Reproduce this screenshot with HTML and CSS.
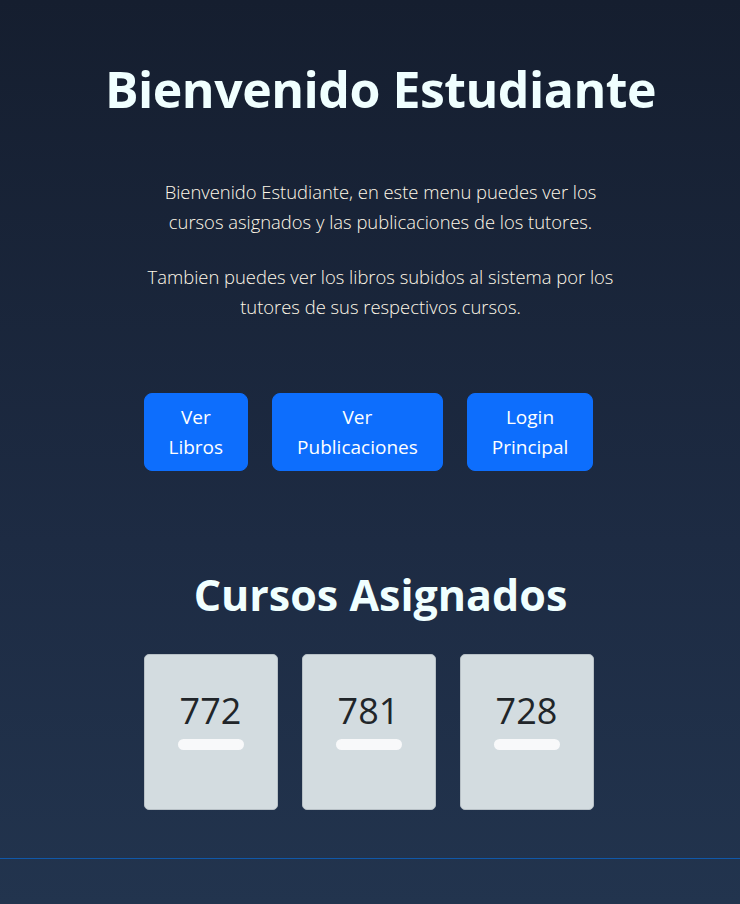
FILE: index.html
```html
<!DOCTYPE html>
<html lang="es">
<head>
<meta charset="utf-8">
<title>Estudiante</title>
<link rel="stylesheet" href="styles.css">
</head>
<body>
<main class="page">
  <section class="hero">
    <h1 class="title">Bienvenido Estudiante</h1>
    <div class="intro">
      <p class="lead">Bienvenido Estudiante, en este menu puedes ver los cursos asignados y las publicaciones de los tutores.</p>
      <p class="lead">Tambien puedes ver los libros subidos al sistema por los tutores de sus respectivos cursos.</p>
    </div>
    <div class="actions">
      <a class="btn" href="#">Ver Libros</a>
      <a class="btn" href="#">Ver Publicaciones</a>
      <a class="btn" href="#">Login Principal</a>
    </div>
  </section>
  <section class="courses">
    <h2 class="subtitle">Cursos Asignados</h2>
    <div class="cards">
      <div class="card"><span class="code">772</span><span class="pill"></span></div>
      <div class="card"><span class="code">781</span><span class="pill"></span></div>
      <div class="card"><span class="code">728</span><span class="pill"></span></div>
    </div>
  </section>
</main>
<div class="rule"></div>
</body>
</html>
```
FILE: styles.css
```css
html, body {
  margin: 0;
  padding: 0;
  height: 100%;
}
body {
  background: linear-gradient(180deg, #151e2f 0%, #1d2b43 60%, #22344e 100%);
  font-family: "Open Sans", "Noto Sans", sans-serif;
  min-height: 904px;
  box-sizing: border-box;
  padding-left: 21px;
  padding-top: 1px;
}
.page {
  display: flex;
  flex-direction: column;
  align-items: center;
}
.hero {
  display: flex;
  flex-direction: column;
  align-items: center;
  width: 100%;
}
.title {
  margin: 55px 0 0;
  font-size: 50px;
  line-height: 67px;
  font-weight: 700;
  letter-spacing: -0.5px;
  color: #f0ffff;
  text-align: center;
}
.intro {
  width: 474px;
  margin-top: 54px;
  display: flex;
  flex-direction: column;
  gap: 25px;
}
.lead {
  margin: 0;
  font-size: 18.4px;
  line-height: 30px;
  font-weight: 300;
  color: #fff8e8;
  text-align: center;
}
.actions {
  width: 474px;
  display: flex;
  gap: 24px;
  margin-top: 71px;
}
.btn {
  display: block;
  width: min-content;
  padding: 8px 24px;
  border: 1px solid #0d6efd;
  border-radius: 8px;
  background: #0d6efd;
  color: #ffffff;
  font-size: 19px;
  line-height: 30px;
  text-align: center;
  text-decoration: none;
}
.courses {
  display: flex;
  flex-direction: column;
  align-items: center;
  width: 100%;
  margin-top: 96px;
}
.subtitle {
  margin: 0;
  font-size: 43px;
  line-height: 56px;
  font-weight: 700;
  color: #f0ffff;
  text-align: center;
}
.cards {
  width: 474px;
  display: flex;
  gap: 24px;
  margin-top: 31px;
}
.card {
  box-sizing: border-box;
  width: 134px;
  height: 156px;
  background: #d3dce0;
  border: 1px solid #b7c0c6;
  border-radius: 5px;
  display: flex;
  flex-direction: column;
  align-items: center;
  padding-top: 31px;
}
.code {
  font-size: 36px;
  line-height: 50px;
  color: #212529;
}
.pill {
  display: block;
  width: 66px;
  height: 11px;
  margin-top: 3px;
  border-radius: 6px;
  background: #f8f9fa;
}
.rule {
  position: absolute;
  left: 0;
  right: 0;
  top: 858px;
  height: 1px;
  background: #1058aa;
}
```
